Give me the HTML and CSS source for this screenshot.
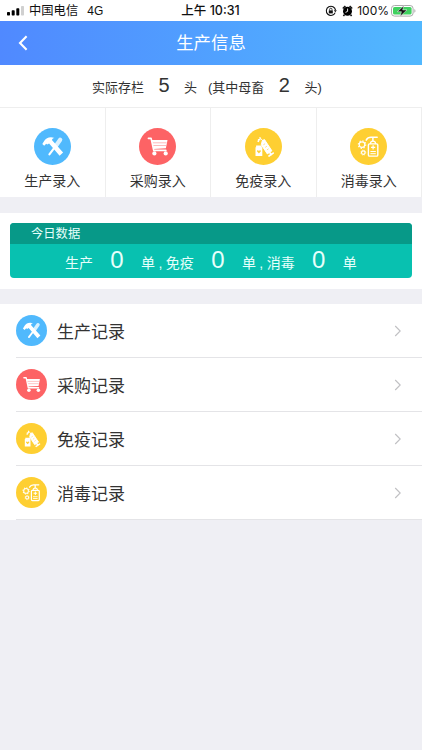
FILE: index.html
```html
<!DOCTYPE html>
<html lang="zh-CN">
<head>
<meta charset="UTF-8"/>
<meta name="viewport" content="width=device-width,initial-scale=1.0"/>
<title>生产信息</title>
<link rel="stylesheet" href="styles.css">
</head>

<body>
<!-- shared icons, drawn on a 37px circle -->
<svg class="defs" width="0" height="0">
  <symbol id="tools" viewBox="0 0 37 37">
    <circle cx="18.5" cy="18.5" r="18.5" fill="#50b9fd"/>
    <path d="M15.4 26.4l6-8" stroke="#fff" stroke-width="2.1" stroke-linecap="round"/>
    <path d="M21.6 18.3l4.6-6.6" stroke="#d9f1ff" stroke-width="4.2" stroke-linecap="round"/>
    <path d="M8.3 16l2.2-3.4c1.6-2.6 5.3-4.4 10-2.7-2 .4-2.7 1.2-2.4 2.3l11 12.2-3.5 3.3-10.5-12.2-1.9 1.1-1-.9-2 2.1z" fill="#fff"/>
  </symbol>
  <symbol id="cart" viewBox="0 0 37 37">
    <circle cx="18.5" cy="18.5" r="18.5" fill="#fd6365"/>
    <path d="M9.4 10.4h2.7l2.6 12h12.2" fill="none" stroke="#fff" stroke-width="1.6" stroke-linecap="round" stroke-linejoin="round"/>
    <path d="M12.8 12h15.7l-1.6 8.3-12.3.6z" fill="#fff"/>
    <path d="M14 14.8h13.6M14.4 17.5h12.7" stroke="#fd8c8d" stroke-width=".6"/>
    <circle cx="15.4" cy="25.4" r="2.1" fill="#fff"/>
    <circle cx="26.7" cy="25.4" r="2.1" fill="#fff"/>
  </symbol>
  <symbol id="vaccine" viewBox="0 0 37 37">
    <circle cx="18.5" cy="18.5" r="18.5" fill="#fecf32"/>
    <path d="M11.1 17.6h5.6v1.6h.6v8.8h-6.8v-8.8h.6z" fill="#fff"/>
    <path d="M13.9 25.5l-2-2.2c.1-1.4 1.5-1.4 2-.4.6-1 2-.9 2 .4z" fill="#fecf32"/>
    <path d="M13.6 11.8l1.2-.2M15 9.9l.2.3M13.2 13.2l.2.1" stroke="#fff" stroke-width="1.6" stroke-linecap="round"/>
    <path d="M15.8 10.5l2 2.4" stroke="#fff" stroke-width="1"/>
    <path d="M17.3 12.6l2.2-1 7.4 11.2-4.6 3.1-6-9.2z" fill="#fff" stroke="#fff" stroke-width="1" stroke-linejoin="round"/>
    <path d="M18.4 16.8l1.7-1.1M20.2 19.4l1.7-1.1M21.9 21.9l1.7-1.1" stroke="#fecf32" stroke-width=".6"/>
    <path d="M24.6 24.2l1.5 2.6M24 28l4.2-2.9" stroke="#fff" stroke-width="1.7" stroke-linecap="round"/>
  </symbol>
  <symbol id="soap" viewBox="0 0 37 37">
    <circle cx="18.5" cy="18.5" r="18.5" fill="#fecf32"/>
    <g fill="none" stroke="#fff" stroke-width="1.2">
      <circle cx="12" cy="16.6" r="2.8"/>
      <circle cx="12" cy="16.6" r="3.7" stroke-dasharray="1.2 1.7"/>
      <circle cx="13.3" cy="24.6" r="1.8"/>
      <circle cx="13.3" cy="24.6" r="2.5" stroke-width=".8" stroke-dasharray=".9 1.1"/>
      <path d="M16.2 12.1c1-2 2.5-2.8 4.8-2.8h6.2M22.9 9.3v3.7" stroke-width="1.5" stroke-linecap="round"/>
      <path d="M20.4 15.9c0-2 1-2.8 2.6-2.8s2.6.8 2.6 2.8"/>
      <rect x="18.4" y="15.9" width="9.4" height="12.2" rx="1.2" stroke-width="1.4"/>
      <path d="M23.1 17.2v4.2M21 19.3h4.2" stroke-width="1.2"/>
      <path d="M20.4 23.5h5.4M20.4 25.7h5.4" stroke-width="1"/>
    </g>
  </symbol>
  <symbol id="arrow" viewBox="0 0 8 12">
    <path d="M1.2 1l5 5-5 5" fill="none" stroke="#c0c0c3" stroke-width="1.1"/>
  </symbol>
</svg>

<!-- status bar -->
<div class="status">
  <div class="status-left">
    <svg width="18" height="10" viewBox="0 0 18 10">
      <rect x="0" y="6" width="3" height="3.5" rx=".7"/>
      <rect x="4.7" y="4.2" width="3" height="5.3" rx=".7"/>
      <rect x="9.3" y="2.2" width="3" height="7.3" rx=".7"/>
      <rect x="14" y="0" width="3" height="9.5" rx=".7" fill="#d0d0d0"/>
    </svg>
    <span class="carrier">中国电信</span>
    <span class="net">4G</span>
  </div>
  <div class="time">上午 10:31</div>
  <div class="status-right">
    <svg width="12" height="12" viewBox="0 0 12 12" fill="none" stroke="#111">
      <path d="M10.2 7.6A4.6 4.6 0 1 1 10.5 5.2" stroke-width="1.1"/>
      <path d="M8.8 5.2h3l-1.5 2z" fill="#111" stroke="none"/>
      <rect x="3.8" y="5.4" width="4" height="3" fill="#111" stroke="none"/>
      <path d="M4.6 5.5V4.4a1.2 1.2 0 0 1 2.4 0v1.1" stroke-width=".8"/>
    </svg>
    <svg class="alarm" width="11" height="12" viewBox="0 0 11 12">
      <circle cx="5.5" cy="6.2" r="4.5"/>
      <path d="M.8 3.5L3.4 1M10.2 3.5L7.6 1M2.4 9.8l-1 1.2M8.6 9.8l1 1.2" stroke="#111" stroke-width="1.6"/>
      <path d="M5.6 3.6v2.8l-2.1 1" stroke="#fff" stroke-width=".9" fill="none"/>
    </svg>
    <span class="percent">100%</span>
    <svg width="25" height="12" viewBox="0 0 25 12">
      <rect x=".5" y=".5" width="21.6" height="10.6" rx="3" fill="#fff" stroke="#aaa"/>
      <rect x="2" y="2" width="18.6" height="7.6" rx="1.6" fill="#3fd15f"/>
      <path d="M23.4 4v3.8c1.4-.6 1.4-3.2 0-3.8z" fill="#aaa"/>
      <path d="M13 .6L6.3 6.7h4.1L9.1 11.4l6.9-6.5h-4.3z" fill="#111" stroke="#fff" stroke-width=".5"/>
    </svg>
  </div>
</div>

<header>
  <svg class="back" width="10" height="16" viewBox="0 0 10 16"><path d="M8.6 1.3L2 8l6.6 6.7" fill="none" stroke="#fff" stroke-width="2.1"/></svg>
  <h1>生产信息</h1>
</header>

<section class="stock">
  <span class="stock-label">实际存栏</span><b>5</b><span>头</span>
  <span class="stock-note">(其中母畜</span><b>2</b><span>头)</span>
</section>

<!-- entry shortcuts -->
<section class="entries">
  <div class="entry"><svg><use href="#tools"/></svg><span>生产录入</span></div>
  <div class="entry"><svg><use href="#cart"/></svg><span>采购录入</span></div>
  <div class="entry"><svg><use href="#vaccine"/></svg><span>免疫录入</span></div>
  <div class="entry"><svg><use href="#soap"/></svg><span>消毒录入</span></div>
</section>

<section class="today">
  <div class="today-card">
    <h2>今日数据</h2>
    <div class="today-row">
      <span class="kind">生产</span><b>0</b><span class="unit">单 , 免疫</span><b>0</b><span class="unit">单 , 消毒</span><b>0</b><span>单</span>
    </div>
  </div>
</section>

<!-- record list -->
<section class="records">
  <div class="record"><svg class="icon"><use href="#tools"/></svg><span>生产记录</span><svg class="arrow"><use href="#arrow"/></svg></div>
  <div class="record"><svg class="icon"><use href="#cart"/></svg><span>采购记录</span><svg class="arrow"><use href="#arrow"/></svg></div>
  <div class="record"><svg class="icon"><use href="#vaccine"/></svg><span>免疫记录</span><svg class="arrow"><use href="#arrow"/></svg></div>
  <div class="record"><svg class="icon"><use href="#soap"/></svg><span>消毒记录</span><svg class="arrow"><use href="#arrow"/></svg></div>
</section>
</body>
</html>
```

FILE: styles.css
```css
:root{
  --bg:#efeff4;--text:#333;--line:#e4e4e7;
  --teal:#08c1b0;--teal-dark:#079988;
}
*,*::before,*::after{box-sizing:border-box;margin:0;padding:0}
body{background:var(--bg);color:var(--text);font-family:"Liberation Sans","Noto Sans CJK SC",sans-serif;min-height:750px;overflow:hidden}
svg{display:block;flex:none}
b{font-weight:400}
.defs{position:absolute}

/* status bar */
.status{display:grid;grid-template-columns:1fr auto 1fr;align-items:center;height:21px;padding:1px 6px 0 7px;background:#fff;color:#111;font-size:12px;line-height:20px;white-space:nowrap}
.status-left,.status-right{display:flex;align-items:center}
.status-right{justify-content:flex-end}
.carrier{margin-left:4px;font-size:12.3px}
.net{margin-left:9px}
.time{margin-right:2px;font-family:Inter,"Noto Sans CJK SC",sans-serif;font-weight:500;font-size:12.5px}
.alarm{margin-left:5px}
.percent{margin:0 2px 0 4px;font-family:Inter,sans-serif;font-size:12px}

header{display:flex;align-items:center;height:44px;padding:0 18px;background:linear-gradient(90deg,#5089ff,#51b8ff);color:#fff}
header h1{flex:1;margin-right:10px;text-align:center;font-size:17.4px;font-weight:400;line-height:44px}

/* stock line */
.stock{display:flex;align-items:baseline;height:42px;padding-left:92px;background:#fff;font-size:13px;line-height:40px;white-space:nowrap}
.stock b{width:40px;text-align:center;font-size:20px}
.stock-note{margin-left:11px}

.entries{display:grid;grid-template-columns:repeat(4,1fr);height:90px;background:#fff;border-top:1px solid #eee}
.entry{display:flex;flex-direction:column;align-items:center;padding-top:20px;border-right:1px solid #eee;font-size:14px;line-height:20px}
.entry svg{width:37px;height:37px;margin-bottom:6px}

/* today */
.today{margin-top:16px;padding:10px 10px 11px;background:#fff}
.today-card{height:55px;border-radius:4px;overflow:hidden;background:var(--teal);color:#e6fffb}
.today h2{height:21px;padding-left:21px;background:var(--teal-dark);font-size:12.3px;font-weight:400;line-height:23px}
.today-row{display:flex;align-items:baseline;padding-left:55px;font-size:14px;line-height:32px;white-space:nowrap}
.today-row b{width:48px;text-align:center;font-size:24px}
.today-row .unit{word-spacing:-.4px}

/* records */
.records{margin-top:15px;background:#fff}
.record{display:flex;align-items:center;height:54px;margin-left:16px;padding-right:20px;border-bottom:1px solid var(--line);font-size:17px}
.record .icon{width:31px;height:31px;margin-right:10px}
.record .arrow{width:8px;height:12px;margin-left:auto}
```
